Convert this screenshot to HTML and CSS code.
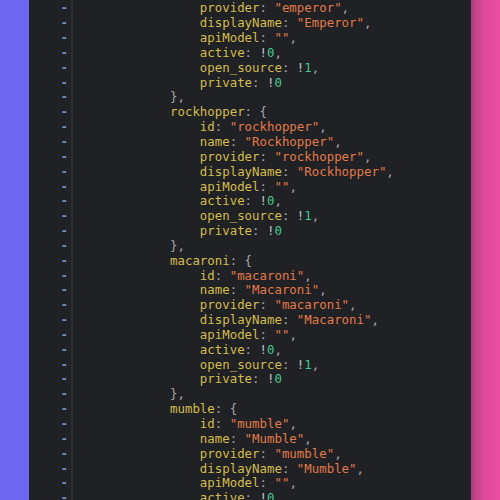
FILE: index.html
```html
<!DOCTYPE html>
<html>
<head>
<meta charset="utf-8">
<link rel="stylesheet" href="styles.css">
</head>
<body>
<div class="frame">
  <div class="side side-left"></div>
  <div class="editor">
    <div class="gutter">
      <div class="ln">-</div><div class="ln">-</div><div class="ln">-</div><div class="ln">-</div><div class="ln">-</div>
      <div class="ln">-</div><div class="ln">-</div><div class="ln">-</div><div class="ln">-</div><div class="ln">-</div>
      <div class="ln">-</div><div class="ln">-</div><div class="ln">-</div><div class="ln">-</div><div class="ln">-</div>
      <div class="ln">-</div><div class="ln">-</div><div class="ln">-</div><div class="ln">-</div><div class="ln">-</div>
      <div class="ln">-</div><div class="ln">-</div><div class="ln">-</div><div class="ln">-</div><div class="ln">-</div>
      <div class="ln">-</div><div class="ln">-</div><div class="ln">-</div><div class="ln">-</div><div class="ln">-</div>
      <div class="ln">-</div><div class="ln">-</div><div class="ln">-</div><div class="ln">-</div>
    </div>
    <div class="code">
      <div class="line">    <span class="k">provider</span><span class="p">: </span><span class="s">"emperor"</span><span class="p">,</span></div>
      <div class="line">    <span class="k">displayName</span><span class="p">: </span><span class="s">"Emperor"</span><span class="p">,</span></div>
      <div class="line">    <span class="k">apiModel</span><span class="p">: </span><span class="s">""</span><span class="p">,</span></div>
      <div class="line">    <span class="k">active</span><span class="p">: </span><span class="o">!</span><span class="n">0</span><span class="p">,</span></div>
      <div class="line">    <span class="k">open_source</span><span class="p">: </span><span class="o">!</span><span class="n">1</span><span class="p">,</span></div>
      <div class="line">    <span class="k">private</span><span class="p">: </span><span class="o">!</span><span class="n">0</span></div>
      <div class="line"><span class="p">},</span></div>
      <div class="line"><span class="k">rockhopper</span><span class="p">: {</span></div>
      <div class="line">    <span class="k">id</span><span class="p">: </span><span class="s">"rockhopper"</span><span class="p">,</span></div>
      <div class="line">    <span class="k">name</span><span class="p">: </span><span class="s">"Rockhopper"</span><span class="p">,</span></div>
      <div class="line">    <span class="k">provider</span><span class="p">: </span><span class="s">"rockhopper"</span><span class="p">,</span></div>
      <div class="line">    <span class="k">displayName</span><span class="p">: </span><span class="s">"Rockhopper"</span><span class="p">,</span></div>
      <div class="line">    <span class="k">apiModel</span><span class="p">: </span><span class="s">""</span><span class="p">,</span></div>
      <div class="line">    <span class="k">active</span><span class="p">: </span><span class="o">!</span><span class="n">0</span><span class="p">,</span></div>
      <div class="line">    <span class="k">open_source</span><span class="p">: </span><span class="o">!</span><span class="n">1</span><span class="p">,</span></div>
      <div class="line">    <span class="k">private</span><span class="p">: </span><span class="o">!</span><span class="n">0</span></div>
      <div class="line"><span class="p">},</span></div>
      <div class="line"><span class="k">macaroni</span><span class="p">: {</span></div>
      <div class="line">    <span class="k">id</span><span class="p">: </span><span class="s">"macaroni"</span><span class="p">,</span></div>
      <div class="line">    <span class="k">name</span><span class="p">: </span><span class="s">"Macaroni"</span><span class="p">,</span></div>
      <div class="line">    <span class="k">provider</span><span class="p">: </span><span class="s">"macaroni"</span><span class="p">,</span></div>
      <div class="line">    <span class="k">displayName</span><span class="p">: </span><span class="s">"Macaroni"</span><span class="p">,</span></div>
      <div class="line">    <span class="k">apiModel</span><span class="p">: </span><span class="s">""</span><span class="p">,</span></div>
      <div class="line">    <span class="k">active</span><span class="p">: </span><span class="o">!</span><span class="n">0</span><span class="p">,</span></div>
      <div class="line">    <span class="k">open_source</span><span class="p">: </span><span class="o">!</span><span class="n">1</span><span class="p">,</span></div>
      <div class="line">    <span class="k">private</span><span class="p">: </span><span class="o">!</span><span class="n">0</span></div>
      <div class="line"><span class="p">},</span></div>
      <div class="line"><span class="k">mumble</span><span class="p">: {</span></div>
      <div class="line">    <span class="k">id</span><span class="p">: </span><span class="s">"mumble"</span><span class="p">,</span></div>
      <div class="line">    <span class="k">name</span><span class="p">: </span><span class="s">"Mumble"</span><span class="p">,</span></div>
      <div class="line">    <span class="k">provider</span><span class="p">: </span><span class="s">"mumble"</span><span class="p">,</span></div>
      <div class="line">    <span class="k">displayName</span><span class="p">: </span><span class="s">"Mumble"</span><span class="p">,</span></div>
      <div class="line">    <span class="k">apiModel</span><span class="p">: </span><span class="s">""</span><span class="p">,</span></div>
      <div class="line">    <span class="k">active</span><span class="p">: </span><span class="o">!</span><span class="n">0</span><span class="p">,</span></div>
    </div>
  </div>
  <div class="side side-right"></div>
</div>
</body>
</html>
```

FILE: styles.css
```css
html, body {
  margin: 0;
  padding: 0;
  width: 500px;
  height: 500px;
  overflow: hidden;
  background: #202125;
}

.frame {
  display: flex;
  width: 500px;
  height: 500px;
  overflow: hidden;
}

.side {
  flex: 0 0 29px;
  height: 500px;
}

.side-left {
  background: #6c66f1;
}

.side-right {
  background: linear-gradient(to right, #a63f7e 0px, #c9448f 6px, #e04a9b 14px, #e94d9f 29px);
}

.editor {
  flex: 1 1 auto;
  display: flex;
  height: 500px;
  overflow: hidden;
  background: #202125;
  font-family: "DejaVu Sans Mono", monospace;
  font-size: 12.4px;
  line-height: 14.85px;
}

.gutter {
  flex: 0 0 44px;
  box-sizing: border-box;
  padding-right: 3px;
  padding-top: 1.4px;
  border-right: 2px solid #2d2e33;
  text-align: right;
  color: #6d8dc6;
  font-weight: bold;
}

.ln {
  height: 14.85px;
}

.code {
  flex: 1 1 auto;
  padding-left: 97px;
  padding-top: 1.4px;
  color: #a9abb0;
}

.line {
  height: 14.85px;
  white-space: pre;
}

.k { color: #d3bd4c; }
.p { color: #a3a5aa; }
.s { color: #e27a4a; }
.o { color: #c6c8cc; }
.n { color: #45c98d; }
```
